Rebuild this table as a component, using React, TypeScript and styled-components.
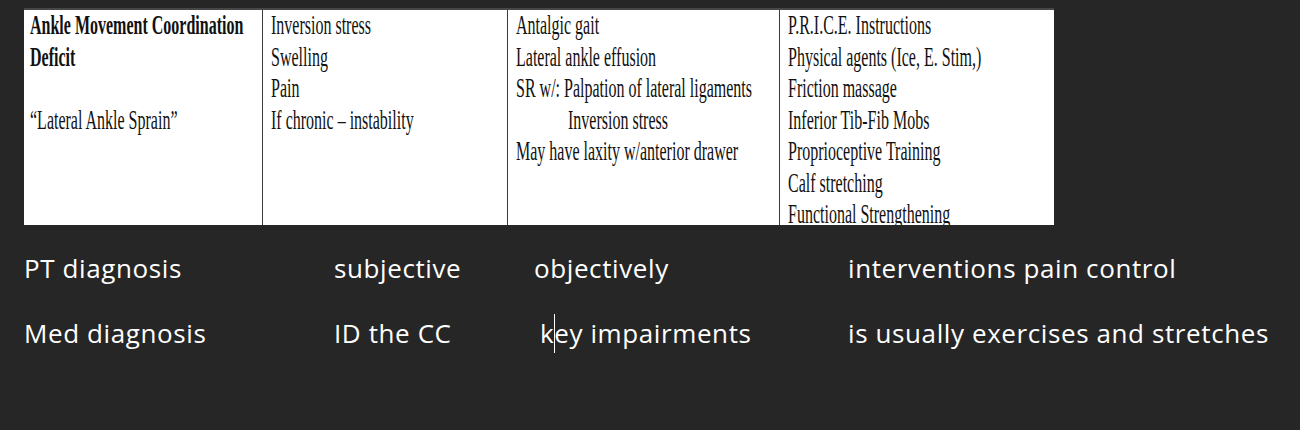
import React from 'react';
import styled, { createGlobalStyle } from 'styled-components';

const GlobalStyle = createGlobalStyle`
    html, body {
        margin: 0;
        padding: 0;
        background: #262626;
    }
    body {
        width: 1300px;
        height: 430px;
        overflow: hidden;
    }
`;

const Page = styled.div`
    padding-top: 8px;
`;

// scanned table from the notes
const Table = styled.div`
    margin-left: 24px;
    width: 1030px;
    height: 217px;
    box-sizing: border-box;
    border-top: 2px solid #474747;
    background: #ffffff;
    display: grid;
    grid-template-columns: 238px 245px 272px 275px;
    overflow: hidden;
`;

const Cell = styled.div<{ $divider?: boolean }>`
    border-left: ${p => (p.$divider ? '1px solid #3a3a3a' : 'none')};
    padding-left: ${p => (p.$divider ? '8px' : '6px')};
    overflow: hidden;
`;

const Lines = styled.div`
    font-family: 'Liberation Serif', 'Times New Roman', serif;
    font-size: 16px;
    line-height: 18.5px;
    color: #111;
    transform: scaleY(1.7);
    transform-origin: top left;
    white-space: nowrap;
`;

const Line = styled.div<{ $bold?: boolean; $indent?: number }>`
    height: 18.5px;
    font-weight: ${p => (p.$bold ? 700 : 400)};
    padding-left: ${p => p.$indent || 0}px;
`;

const Notes = styled.div`
    margin-top: 24px;
    margin-left: 24px;
    display: flex;
    flex-direction: column;
    gap: 26px;
`;

const NoteRow = styled.div`
    display: grid;
    grid-template-columns: 310px 200px 314px auto;
    font-family: 'Open Sans', Lato, sans-serif;
    font-size: 26px;
    letter-spacing: 0.6px;
    line-height: 39px;
    color: #ffffff;
    white-space: nowrap;
`;

const Note = styled.span<{ $indent?: number }>`
    padding-left: ${p => p.$indent || 0}px;
`;

const Caret = styled.span`
    display: inline-block;
    width: 1px;
    height: 39px;
    margin-right: -1px;
    background: #ffffff;
    vertical-align: -10px;
`;

const columns = [
    [
        { text: 'Ankle Movement Coordination', bold: true },
        { text: 'Deficit', bold: true },
        { text: '' },
        { text: '\u201cLateral Ankle Sprain\u201d' },
    ],
    [
        { text: 'Inversion stress' },
        { text: 'Swelling' },
        { text: 'Pain' },
        { text: 'If chronic \u2013 instability' },
    ],
    [
        { text: 'Antalgic gait' },
        { text: 'Lateral ankle effusion' },
        { text: 'SR w/: Palpation of lateral ligaments' },
        { text: 'Inversion stress', indent: 52 },
        { text: 'May have laxity w/anterior drawer' },
    ],
    [
        { text: 'P.R.I.C.E. Instructions' },
        { text: 'Physical agents (Ice, E. Stim,)' },
        { text: 'Friction massage' },
        { text: 'Inferior Tib-Fib Mobs' },
        { text: 'Proprioceptive Training' },
        { text: 'Calf stretching' },
        { text: 'Functional Strengthening' },
    ],
];

const App = () => {
    return (
        <Page>
            <GlobalStyle />
            <Table>
                {columns.map((col, i) => (
                    <Cell key={i} $divider={i > 0}>
                        <Lines>
                            {col.map((line, j) => (
                                <Line key={j} $bold={line.bold} $indent={line.indent}>
                                    {line.text}
                                </Line>
                            ))}
                        </Lines>
                    </Cell>
                ))}
            </Table>
            <Notes>
                <NoteRow>
                    <Note>PT diagnosis</Note>
                    <Note>subjective</Note>
                    <Note>objectively</Note>
                    <Note>interventions pain control</Note>
                </NoteRow>
                <NoteRow>
                    <Note>Med diagnosis</Note>
                    <Note>ID the CC</Note>
                    <Note $indent={6}>
                        k<Caret />ey impairments
                    </Note>
                    <Note>is usually exercises and stretches</Note>
                </NoteRow>
            </Notes>
        </Page>
    );
};

export default App;
